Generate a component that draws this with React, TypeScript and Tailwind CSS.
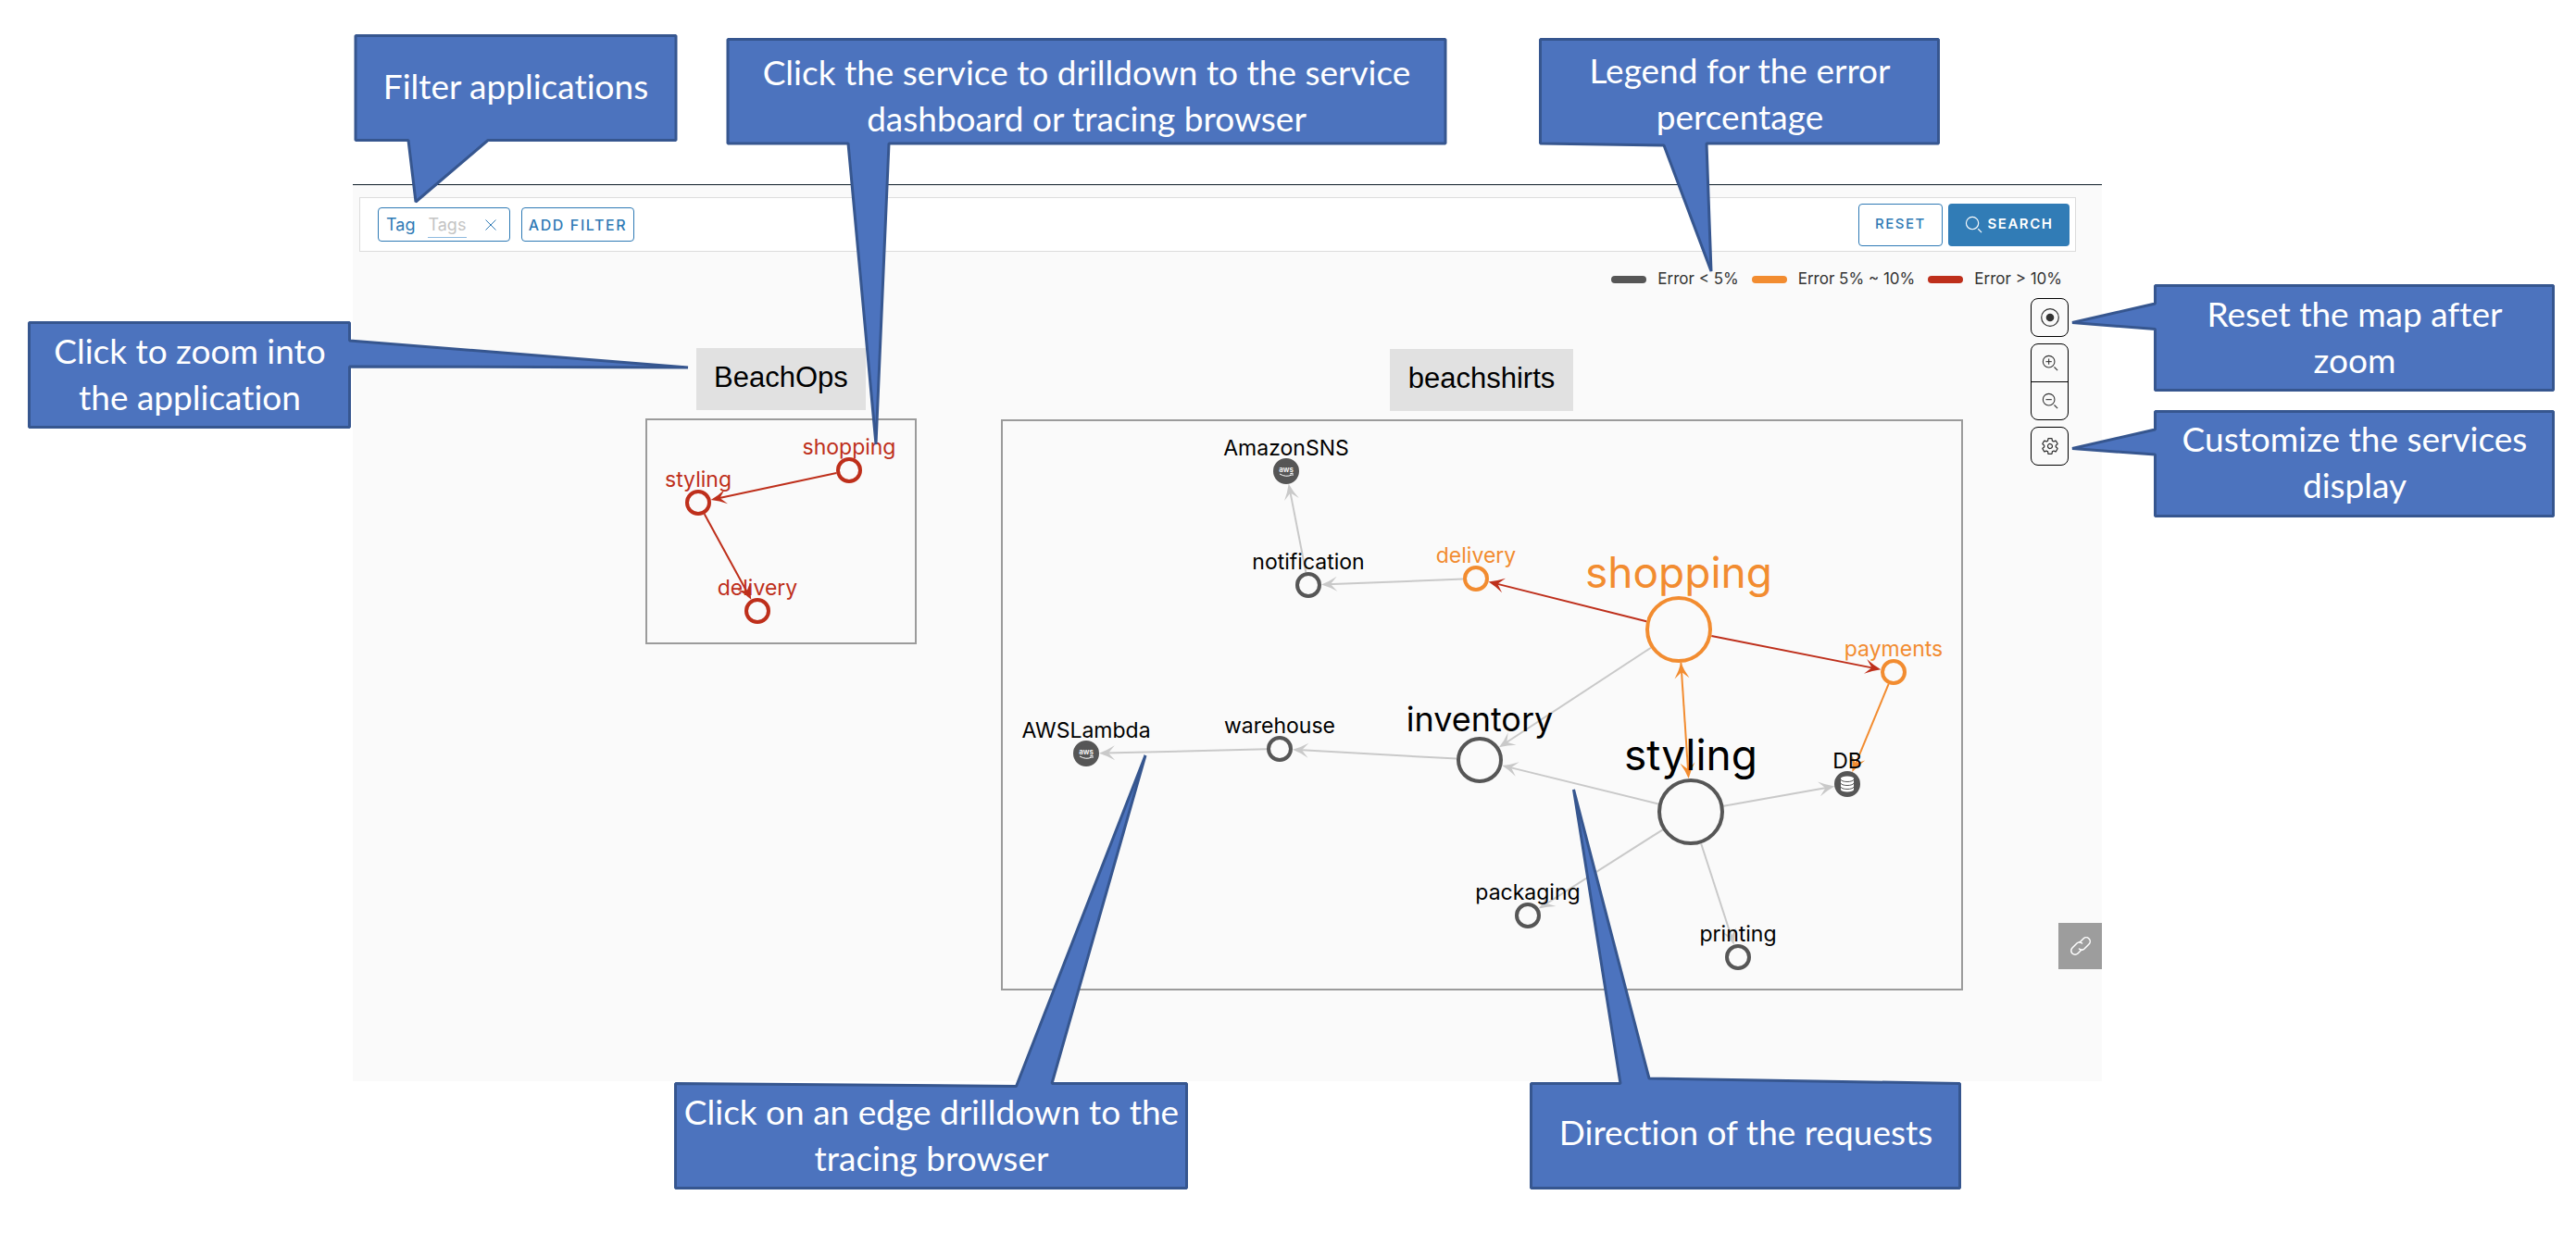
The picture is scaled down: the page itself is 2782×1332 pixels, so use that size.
import React from "react";
import { IoSettingsOutline } from "react-icons/io5";

const RED = "#be2f1b";
const ORANGE = "#f28c30";
const DARK = "#565656";
const LIGHT = "#c9c9c9";

type Kind = "ring" | "aws" | "db";
type Service = {
  id: string;
  label: string;
  x: number;
  y: number;
  r: number;
  color: string;
  text: string;
  size: "sm" | "md" | "lg";
  kind?: Kind;
};

const services: Service[] = [
  { id: "ops-shopping", label: "shopping", x: 917, y: 508, r: 12, color: RED, text: RED, size: "sm" },
  { id: "ops-styling", label: "styling", x: 754, y: 543, r: 12, color: RED, text: RED, size: "sm" },
  { id: "ops-delivery", label: "delivery", x: 818, y: 660, r: 12, color: RED, text: RED, size: "sm" },
  { id: "sns", label: "AmazonSNS", x: 1389, y: 509, r: 12, color: DARK, text: "#000", size: "sm", kind: "aws" },
  { id: "notification", label: "notification", x: 1413, y: 632, r: 12, color: DARK, text: "#000", size: "sm" },
  { id: "delivery", label: "delivery", x: 1594, y: 625, r: 12, color: ORANGE, text: ORANGE, size: "sm" },
  { id: "lambda", label: "AWSLambda", x: 1173, y: 814, r: 12, color: DARK, text: "#000", size: "sm", kind: "aws" },
  { id: "warehouse", label: "warehouse", x: 1382, y: 809, r: 12, color: DARK, text: "#000", size: "sm" },
  { id: "inventory", label: "inventory", x: 1598, y: 821, r: 23, color: DARK, text: "#000", size: "md" },
  { id: "shopping", label: "shopping", x: 1813, y: 680, r: 34, color: ORANGE, text: ORANGE, size: "lg" },
  { id: "styling", label: "styling", x: 1826, y: 877, r: 34, color: DARK, text: "#000", size: "lg" },
  { id: "payments", label: "payments", x: 2045, y: 726, r: 12, color: ORANGE, text: ORANGE, size: "sm" },
  { id: "db", label: "DB", x: 1995, y: 847, r: 12, color: DARK, text: "#000", size: "sm", kind: "db" },
  { id: "packaging", label: "packaging", x: 1650, y: 989, r: 12, color: DARK, text: "#000", size: "sm" },
  { id: "printing", label: "printing", x: 1877, y: 1034, r: 12, color: DARK, text: "#000", size: "sm" },
];

const edges: { from: string; to: string; color: string; both?: boolean }[] = [
  { from: "ops-shopping", to: "ops-styling", color: RED },
  { from: "ops-styling", to: "ops-delivery", color: RED },
  { from: "notification", to: "sns", color: LIGHT },
  { from: "delivery", to: "notification", color: LIGHT },
  { from: "shopping", to: "delivery", color: RED },
  { from: "shopping", to: "payments", color: RED },
  { from: "shopping", to: "inventory", color: LIGHT },
  { from: "shopping", to: "styling", color: ORANGE, both: true },
  { from: "payments", to: "db", color: ORANGE },
  { from: "styling", to: "inventory", color: LIGHT },
  { from: "styling", to: "db", color: LIGHT },
  { from: "styling", to: "packaging", color: LIGHT },
  { from: "styling", to: "printing", color: LIGHT },
  { from: "inventory", to: "warehouse", color: LIGHT },
  { from: "warehouse", to: "lambda", color: LIGHT },
];

const labelClass = { sm: "text-[23px]", md: "text-[36px]", lg: "text-[46px]" };
const labelLift = { sm: 5, md: 8, lg: 11 };

function ArrowHead({ x, y, angle, color }: { x: number; y: number; angle: number; color: string }) {
  return (
    <path
      d="M0 0Q-9 -3 -17 -8L-10 0L-17 8Q-9 3 0 0Z"
      fill={color}
      transform={`translate(${x} ${y}) rotate(${angle})`}
    />
  );
}

function Edge({ from, to, color, both }: { from: Service; to: Service; color: string; both?: boolean }) {
  const dx = to.x - from.x;
  const dy = to.y - from.y;
  const len = Math.hypot(dx, dy);
  const ux = dx / len;
  const uy = dy / len;
  const angle = (Math.atan2(dy, dx) * 180) / Math.PI;
  const gapFrom = from.r + 2;
  const gapTo = to.r + 2;
  const x1 = from.x + ux * gapFrom;
  const y1 = from.y + uy * gapFrom;
  const x2 = to.x - ux * gapTo;
  const y2 = to.y - uy * gapTo;
  return (
    <g>
      <line x1={x1} y1={y1} x2={x2 - ux * 6} y2={y2 - uy * 6} stroke={color} strokeWidth={2} />
      <ArrowHead x={x2} y={y2} angle={angle} color={color} />
      {both && <ArrowHead x={x1} y={y1} angle={angle + 180} color={color} />}
    </g>
  );
}

function ServiceNode({ s }: { s: Service }) {
  const filled = s.kind === "aws" || s.kind === "db";
  return (
    <g className="cursor-pointer">
      <circle cx={s.x} cy={s.y} r={s.r} fill={filled ? s.color : "#fafafa"} stroke={s.color} strokeWidth={4} />
      {s.kind === "aws" && (
        <g>
          <text x={s.x} y={s.y + 1} textAnchor="middle" fill="#fff" className="text-[8px] font-semibold">
            aws
          </text>
          <path
            d={`M${s.x - 7} ${s.y + 3}Q${s.x} ${s.y + 7} ${s.x + 6} ${s.y + 4}M${s.x + 4} ${s.y + 3}L${s.x + 7} ${s.y + 2}L${s.x + 7} ${s.y + 5}`}
            fill="none"
            stroke="#fff"
            strokeWidth={1}
          />
        </g>
      )}
      {s.kind === "db" && (
        <g transform={`translate(${s.x} ${s.y})`}>
          <path d="M-7 -6V6A7 2.500 0 0 0 7 6V-6Z" fill="#fff" />
          <ellipse cx={0} cy={-6} rx={7} ry={2.5} fill="#fff" />
          <path
            d="M-7 -5A7 2.500 0 0 0 7 -5M-7 -1A7 2.500 0 0 0 7 -1M-7 3A7 2.500 0 0 0 7 3"
            fill="none"
            stroke={DARK}
            strokeWidth={1}
          />
        </g>
      )}
    </g>
  );
}

function AppTitle({ x, y, width, children }: { x: number; y: number; width: number; children: string }) {
  return (
    <g className="cursor-pointer">
      <rect x={x} y={y} width={width} height={67} fill="#e1e1e1" />
      <text
        x={x + width / 2}
        y={y + 42}
        textAnchor="middle"
        fill="#000"
        className="font-['Liberation_Sans',Arial,sans-serif] text-[31px]"
      >
        {children}
      </text>
    </g>
  );
}

function ServiceMap() {
  const byId = new Map(services.map((s) => [s.id, s]));
  return (
    <svg viewBox="381 320 1809 848" className="block h-auto w-full" role="img" aria-label="Application map">
      <rect x={698} y={453} width={291} height={242} fill="none" stroke="#9b9b9b" strokeWidth={2} />
      <rect x={1082} y={454} width={1037} height={615} fill="none" stroke="#9b9b9b" strokeWidth={2} />
      <AppTitle x={752} y={376} width={183}>BeachOps</AppTitle>
      <AppTitle x={1501} y={377} width={198}>beachshirts</AppTitle>
      {edges.map((e) => (
        <Edge key={e.from + e.to} from={byId.get(e.from)!} to={byId.get(e.to)!} color={e.color} both={e.both} />
      ))}
      {services.map((s) => (
        <ServiceNode key={s.id} s={s} />
      ))}
      {services.map((s) => (
        <text
          key={s.id}
          x={s.x}
          y={s.y - s.r - labelLift[s.size]}
          textAnchor="middle"
          fill={s.text}
          className={labelClass[s.size]}
        >
          {s.label}
        </text>
      ))}
    </svg>
  );
}

function Magnifier({ sign, className }: { sign?: "plus" | "minus"; className: string }) {
  return (
    <svg viewBox="0 0 20 20" className={className} fill="none" stroke="currentColor" strokeWidth={1.2} aria-hidden="true">
      <circle cx={8.5} cy={8.5} r={7} />
      <path d="M15 15L19 19" />
      {sign && <path d="M5 8.5H12" />}
      {sign === "plus" && <path d="M8.5 5V12" />}
    </svg>
  );
}

function LinkIcon() {
  return (
    <svg viewBox="0 0 24 24" className="size-6" fill="none" stroke="currentColor" strokeWidth={1.5} strokeLinecap="round" aria-hidden="true">
      <path d="M11 8L15 4A4 4 0 0 1 21 10L16 15A4 4 0 0 1 10.500 15" />
      <path d="M13 16L9 20A4 4 0 0 1 3 14L8 9A4 4 0 0 1 13.500 9" />
    </svg>
  );
}

function Toolbar() {
  return (
    <form
      className="ml-[7px] mr-7 flex h-[59px] items-center justify-between border border-[#dcdcdc] bg-white pl-[19px] pr-1.5 text-[#2f7ab5]"
      onSubmit={(e) => e.preventDefault()}
    >
      <div className="flex items-center gap-3">
        <div className="flex h-[37px] w-[143px] items-center rounded border border-[#2f7ab5] pl-2 text-[18px]">
          <label htmlFor="tag-filter">Tag</label>
          <input
            id="tag-filter"
            type="text"
            placeholder="Tags"
            className="ml-3.5 w-[42px] border-b border-[#8fbbe0] outline-none placeholder:text-[#c4c4c4]"
          />
          <button type="button" aria-label="Remove tag filter" className="ml-5">
            <svg viewBox="0 0 12 12" className="size-3" fill="none" stroke="currentColor" aria-hidden="true">
              <path d="M0.500 0.500L11.500 11.500M11.500 0.500L0.500 11.500" />
            </svg>
          </button>
        </div>
        <button type="button" className="h-[37px] w-[122px] whitespace-nowrap rounded border border-[#2f7ab5] text-[16px] font-medium tracking-widest">
          ADD FILTER
        </button>
      </div>
      <div className="flex gap-1.5">
        <button type="reset" className="h-[46px] w-[91px] rounded border border-[#2f7ab5] text-[15px] font-medium tracking-widest">
          RESET
        </button>
        <button
          type="submit"
          className="flex h-[46px] w-[131px] items-center justify-center gap-1.5 rounded bg-[#317cb6] text-[15px] font-semibold tracking-widest text-white"
        >
          <Magnifier className="size-[19px]" />
          SEARCH
        </button>
      </div>
    </form>
  );
}

function LegendItem({ swatch, children }: { swatch: string; children: string }) {
  return (
    <li className="flex items-center gap-3">
      <span className={`h-2 w-[38px] rounded ${swatch}`} />
      {children}
    </li>
  );
}

function MapTools() {
  return (
    <aside className="flex w-20 shrink-0 flex-col items-end pt-0.5 text-[#333]">
      <div className="mr-9 flex w-[41px] flex-col gap-[7px]">
        <button type="button" aria-label="Reset map" className="flex h-[42px] items-center justify-center rounded-lg border border-black">
          <svg viewBox="0 0 20 20" className="size-5" aria-hidden="true">
            <circle cx={10} cy={10} r={9.3} fill="none" stroke="currentColor" strokeWidth={1.2} />
            <circle cx={10} cy={10} r={4.3} fill="currentColor" />
          </svg>
        </button>
        <div className="flex flex-col divide-y divide-black rounded-lg border border-black">
          <button type="button" aria-label="Zoom in" className="flex h-[41px] items-center justify-center">
            <Magnifier sign="plus" className="size-[18px]" />
          </button>
          <button type="button" aria-label="Zoom out" className="flex h-10 items-center justify-center">
            <Magnifier sign="minus" className="size-[18px]" />
          </button>
        </div>
        <button type="button" aria-label="Display settings" className="flex h-[42px] items-center justify-center rounded-lg border border-black">
          <IoSettingsOutline className="size-5" />
        </button>
      </div>
      <button type="button" aria-label="Copy link" className="mb-[121px] mt-auto flex h-[50px] w-[47px] items-center justify-center bg-[#9d9d9d] text-white">
        <LinkIcon />
      </button>
    </aside>
  );
}

type Callout = { points: string; x: number; y: number; w: number; h: number; lines: string[] };

const callouts: Callout[] = [
  {
    points: "384,38.500 730,38.500 730,151.500 527,151.500 449,218 441,151.500 384,151.500",
    x: 384, y: 36, w: 346, h: 113,
    lines: ["Filter applications"],
  },
  {
    points: "786,42.500 1561,42.500 1561,155 960,155 946,480 916,155 786,155",
    x: 786, y: 46, w: 775, h: 113,
    lines: ["Click the service to drilldown to the service", "dashboard or tracing browser"],
  },
  {
    points: "1663.500,42.500 2093.500,42.500 2093.500,155 1843,155 1848,293 1797,157 1663.500,155",
    x: 1664, y: 44, w: 430, h: 113,
    lines: ["Legend for the error", "percentage"],
  },
  {
    points: "31.500,348.500 377.500,348.500 377.500,368 743,397 377.500,396 377.500,461.500 31.500,461.500",
    x: 32, y: 347, w: 346, h: 113,
    lines: ["Click to zoom into", "the application"],
  },
  {
    points: "2327.500,308.500 2757.500,308.500 2757.500,421.500 2327.500,421.500 2327.500,355.500 2238,348.500 2327.500,328 2327.500,308.500",
    x: 2328, y: 307, w: 430, h: 113,
    lines: ["Reset the map after", "zoom"],
  },
  {
    points: "2327.500,444.500 2757.500,444.500 2757.500,557.500 2327.500,557.500 2327.500,491 2238,484.500 2327.500,464 2327.500,444.500",
    x: 2328, y: 442, w: 430, h: 113,
    lines: ["Customize the services", "display"],
  },
  {
    points: "729.500,1170.500 1097.500,1173.500 1237,816 1136,1170.500 1281.500,1170.500 1281.500,1283.500 729.500,1283.500",
    x: 730, y: 1169, w: 552, h: 113,
    lines: ["Click on an edge drilldown to the", "tracing browser"],
  },
  {
    points: "1653.500,1170.500 1750,1170.500 1699.500,853 1781,1165 2116.500,1170.500 2116.500,1283.500 1653.500,1283.500",
    x: 1654, y: 1166, w: 463, h: 113,
    lines: ["Direction of the requests"],
  },
];

const PAGE_W = 2782;
const PAGE_H = 1332;
const pct = (v: number, total: number) => `${(v / total) * 100}%`;

function Callouts() {
  return (
    <div className="pointer-events-none absolute inset-0">
      <svg viewBox={`0 0 ${PAGE_W} ${PAGE_H}`} preserveAspectRatio="none" className="absolute inset-0 size-full" aria-hidden="true">
        {callouts.map((c) => (
          <polygon
            key={c.lines[0]}
            points={c.points}
            fill="#4c73be"
            stroke="#36568f"
            strokeWidth={3}
            strokeLinejoin="bevel"
            vectorEffect="non-scaling-stroke"
          />
        ))}
      </svg>
      {callouts.map((c) => (
        <p
          key={c.lines[0]}
          className="absolute flex flex-col items-center justify-center whitespace-nowrap font-[Lato,sans-serif] text-[37px] leading-[50px] text-white [font-variant-ligatures:none]"
          style={{
            left: pct(c.x, PAGE_W),
            top: pct(c.y, PAGE_H),
            width: pct(c.w, PAGE_W),
            height: pct(c.h, PAGE_H),
          }}
        >
          {c.lines.map((line) => (
            <span key={line}>{line}</span>
          ))}
        </p>
      ))}
    </div>
  );
}

export default function App() {
  return (
    <div className="relative grid grid-cols-[381fr_1889fr_512fr] bg-white pb-41 pt-[199px] font-[Inter,sans-serif]">
      <main className="col-start-2 min-w-0 border-t border-[#0c1c26] bg-[#fafafa] pt-[13px]">
        <Toolbar />
        <ul className="mr-[43px] flex h-12 items-center justify-end gap-3.5 pt-3 text-[17px] text-[#333]">
          <LegendItem swatch="bg-[#565656]">{"Error < 5%"}</LegendItem>
          <LegendItem swatch="bg-[#f28c30]">Error 5% ~ 10%</LegendItem>
          <LegendItem swatch="bg-[#be2f1b]">{"Error > 10%"}</LegendItem>
        </ul>
        <div className="flex">
          <div className="min-w-0 flex-1">
            <ServiceMap />
          </div>
          <MapTools />
        </div>
      </main>
      <Callouts />
    </div>
  );
}
